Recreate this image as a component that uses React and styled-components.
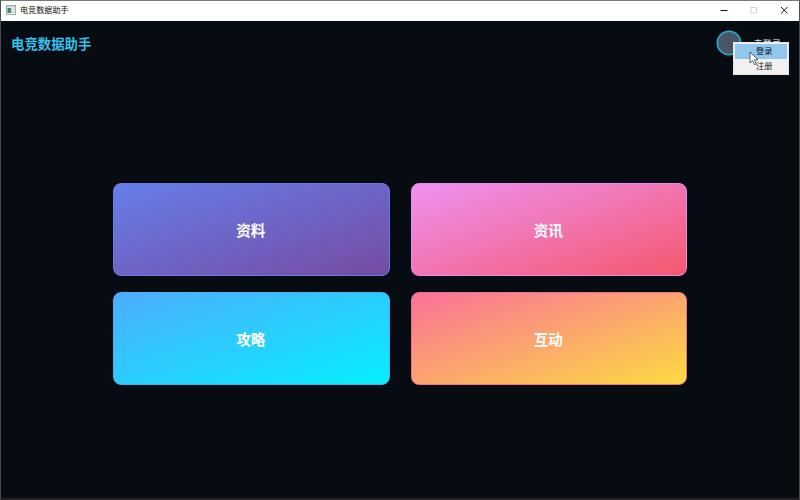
import React from 'react';
import styled, { createGlobalStyle } from 'styled-components';

const Global = createGlobalStyle`
  * { box-sizing: border-box; }
  body { margin: 0; background: #080b12; overflow: hidden; }
`;

const Window = styled.div`
  position: relative;
  width: 800px;
  height: 500px;
  display: flex;
  flex-direction: column;
  background: #070b12;
  border: 1px solid #4b4d50;
  border-top-color: #77797c;
  border-bottom: 2px solid #202226;
  font-family: "Noto Sans CJK SC", sans-serif;
`;

const TitleBar = styled.header`
  height: 20px;
  flex: none;
  display: flex;
  align-items: center;
  background: #fff;
  padding-left: 5px;
`;

const WindowTitle = styled.span`
  flex: 1;
  margin: -2px 0 0 4px;
  font-size: 8.1px;
  line-height: 18px;
  color: #111;
`;

const AppIcon = styled.svg`
  width: 10px;
  height: 10px;
  margin-top: -2px;
`;

const ControlButton = styled.button`
  width: 30px;
  height: 20px;
  padding: 0 0 2px;
  border: 0;
  background: transparent;
  color: ${({ $disabled }) => ($disabled ? '#c9c9c9' : '#111')};
  display: flex;
  align-items: center;
  justify-content: center;
`;

const Header = styled.div`
  height: 44px;
  flex: none;
  display: flex;
  align-items: center;
  padding: 0 18px 0 10px;
`;

const Brand = styled.h1`
  flex: 1;
  margin: 0 0 1px;
  font-size: 13.4px;
  line-height: 20px;
  font-weight: 700;
  color: #2fc3ee;
`;

const Avatar = styled.div`
  width: 24px;
  height: 24px;
  border-radius: 50%;
  background: #4a5568;
  border: 1.5px solid #22b4d6;
  box-shadow: 0 0 0 0.5px #22b4d6;
`;

const UserName = styled.span`
  margin: 0 0 1px 12px;
  font-size: 9.2px;
  line-height: 14px;
  color: #e2e8f0;
`;

const Menu = styled.div`
  position: absolute;
  left: 732px;
  top: 41px;
  width: 56px;
  height: 33px;
  padding: 1px;
  background: #f1f1f1;
  border: 1px solid #e6e6e6;
`;

const MenuItem = styled.div`
  height: 15px;
  padding-left: 21px;
  font-size: 8.2px;
  line-height: 12px;
  color: #111;
  background: ${({ $active }) => ($active ? '#8fc7ee' : 'transparent')};
`;

const Cursor = styled.svg`
  position: absolute;
  left: 748px;
  top: 50px;
  width: 10px;
  height: 15px;
`;

const Grid = styled.main`
  flex: 1;
  display: grid;
  grid-template-columns: 276.5px 276.5px;
  grid-auto-rows: 93px;
  column-gap: 21px;
  row-gap: 16px;
  justify-content: center;
  align-content: start;
  padding-top: 118px;
`;

const Card = styled.button`
  display: flex;
  align-items: center;
  justify-content: center;
  padding: 0 1px 1px 0;
  border: 1.5px solid ${({ $edge }) => $edge};
  border-radius: 8px;
  background: linear-gradient(to bottom right, ${({ $from }) => $from}, ${({ $to }) => $to}) border-box;
  font-family: inherit;
  font-size: 14.6px;
  font-weight: 700;
  color: #fff;
`;

const cards = [
  { label: '资料', from: '#667eea', to: '#764ba2', edge: '#667ce4' },
  { label: '资讯', from: '#ee92f3', to: '#f5576c', edge: '#e68cee' },
  { label: '攻略', from: '#4facfe', to: '#04effe', edge: '#4facee' },
  { label: '互动', from: '#fa709a', to: '#fddb41', edge: '#ec6f96' },
];

export default function App() {
  return (
    <Window>
      <Global />
      <TitleBar>
        <AppIcon viewBox="0 0 10 10">
          <rect x="0.5" y="0.5" width="9" height="9" fill="#f5f5f5" stroke="#a5a8aa" />
          <rect x="1" y="1" width="8" height="1.3" fill="#c5cacd" />
          <rect x="1.5" y="3" width="3.7" height="5" fill="#347f91" />
          <rect x="3.2" y="5" width="2" height="3" fill="#499a6b" />
          <rect x="6.5" y="3" width="2" height="5" fill="#d3d5d6" />
        </AppIcon>
        <WindowTitle>电竞数据助手</WindowTitle>
        <ControlButton>
          <svg width="8" height="8"><path d="M0.5 4.5h7" stroke="currentColor" /></svg>
        </ControlButton>
        <ControlButton $disabled>
          <svg width="8" height="8"><rect x="1" y="1.5" width="5.5" height="5.5" fill="none" stroke="currentColor" strokeWidth="0.8" /></svg>
        </ControlButton>
        <ControlButton>
          <svg width="8" height="8"><path d="M1 1l6.5 6.5M7.5 1L1 7.5" stroke="currentColor" /></svg>
        </ControlButton>
      </TitleBar>
      <Header>
        <Brand>电竞数据助手</Brand>
        <Avatar />
        <UserName>未登录</UserName>
      </Header>
      <Grid>
        {cards.map((c) => (
          <Card key={c.label} $from={c.from} $to={c.to} $edge={c.edge}>{c.label}</Card>
        ))}
      </Grid>
      <Menu>
        <MenuItem $active>登录</MenuItem>
        <MenuItem>注册</MenuItem>
      </Menu>
      <Cursor viewBox="0 0 10 15">
        <path d="M1 1v11l2.6-2.4 1.9 4 1.8-.8-1.9-4H9z" fill="#fff" stroke="#333b45" strokeWidth="0.8" />
      </Cursor>
    </Window>
  );
}
